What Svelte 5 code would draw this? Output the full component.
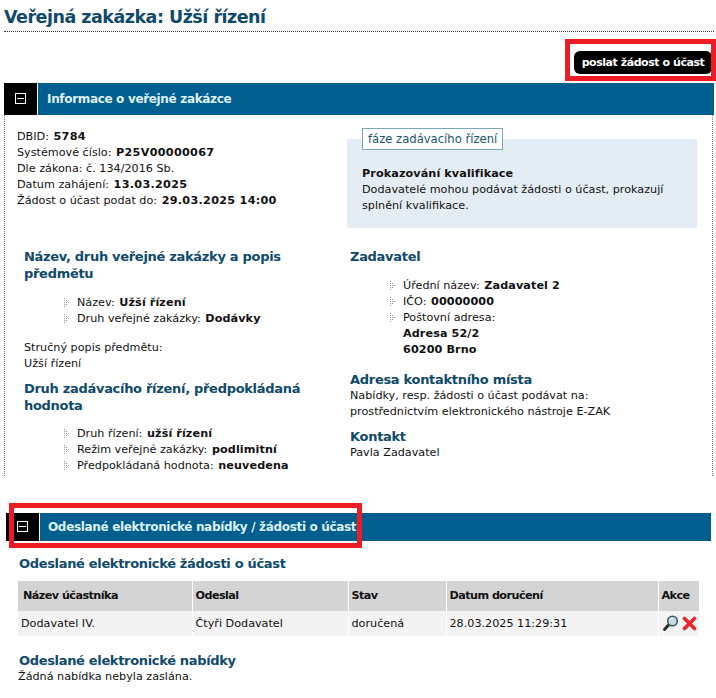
<script>
  const info = [
    { label: "DBID:", value: "5784" },
    { label: "Systémové číslo:", value: "P25V00000067" },
    { label: "Dle zákona: č. 134/2016 Sb.", value: "" },
    { label: "Datum zahájení:", value: "13.03.2025" },
    { label: "Žádost o účast podat do:", value: "29.03.2025 14:00" },
  ];
  const subject = [
    { label: "Název:", value: "Užší řízení" },
    { label: "Druh veřejné zakázky:", value: "Dodávky" },
  ];
  const procedure = [
    { label: "Druh řízení:", value: "užší řízení" },
    { label: "Režim veřejné zakázky:", value: "podlimitní" },
    { label: "Předpokládaná hodnota:", value: "neuvedena" },
  ];
  const buyer = [
    { label: "Úřední název:", value: "Zadavatel 2" },
    { label: "IČO:", value: "00000000" },
  ];
</script>

{#snippet bullet()}
  <svg class="bullet" width="6" height="10" viewBox="0 0 6 10">
    <g fill="#9a9a9a">
      <rect x="0" y="0" width="1" height="1" /><rect x="0" y="2" width="1" height="1" />
      <rect x="0" y="4" width="1" height="1" /><rect x="0" y="6" width="1" height="1" />
      <rect x="0" y="8" width="1" height="1" /><rect x="2" y="2" width="1" height="1" />
      <rect x="2" y="4" width="1" height="1" /><rect x="2" y="6" width="1" height="1" />
      <rect x="4" y="4" width="1" height="1" />
    </g>
  </svg>
{/snippet}

{#snippet toggle()}
  <span class="toggle">
    <svg width="12" height="12" viewBox="0 0 12 12">
      <rect x="0.5" y="0.5" width="10" height="10" fill="none" stroke="#fff" />
      <path d="M2 5.5h7" stroke="#fff" />
    </svg>
  </span>
{/snippet}

<div class="page">
  <h1>Veřejná zakázka: Užší řízení</h1>

  <div class="actions">
    <button type="button">poslat žádost o účast</button>
    <span class="mark mark-button"></span>
  </div>

  <section class="panel">
    <header class="panel-head">
      {@render toggle()}
      <h2>Informace o veřejné zakázce</h2>
    </header>
    <div class="panel-body">
      <div class="summary">
        <div class="facts">
          {#each info as { label, value }}
            <div>{label} <b>{value}</b></div>
          {/each}
        </div>
        <div class="phase">
          <span class="phase-tag">fáze zadávacího řízení</span>
          <div><b class="flush">Prokazování kvalifikace</b></div>
          <div>Dodavatelé mohou podávat žádosti o účast, prokazují splnění kvalifikace.</div>
        </div>
      </div>

      <div class="columns">
        <div class="col-left">
          <h3>Název, druh veřejné zakázky a popis předmětu</h3>
          <ul>
            {#each subject as { label, value }}
              <li>{@render bullet()}{label} <b>{value}</b></li>
            {/each}
          </ul>
          <p class="brief">Stručný popis předmětu:<br />Užší řízení</p>
          <h3>Druh zadávacího řízení, předpokládaná hodnota</h3>
          <ul class="procedure">
            {#each procedure as { label, value }}
              <li>{@render bullet()}{label} <b>{value}</b></li>
            {/each}
          </ul>
        </div>
        <div class="col-right">
          <h3>Zadavatel</h3>
          <ul class="buyer">
            {#each buyer as { label, value }}
              <li>{@render bullet()}{label} <b>{value}</b></li>
            {/each}
            <li>{@render bullet()}Poštovní adresa:<br /><b class="flush">Adresa 52/2<br />60200 Brno</b></li>
          </ul>
          <h3>Adresa kontaktního místa</h3>
          <p>Nabídky, resp. žádosti o účast podávat na:<br />prostřednictvím elektronického nástroje E-ZAK</p>
          <h3 class="contact">Kontakt</h3>
          <p>Pavla Zadavatel</p>
        </div>
      </div>
    </div>
  </section>

  <section class="panel offers">
    <header class="panel-head">
      {@render toggle()}
      <h2>Odeslané elektronické nabídky / žádosti o účast</h2>
      <span class="mark mark-head"></span>
    </header>
    <div class="offers-body">
      <h3>Odeslané elektronické žádosti o účast</h3>
      <table>
        <thead>
          <tr>
            <th class="c1">Název účastníka</th>
            <th class="c2">Odeslal</th>
            <th class="c3">Stav</th>
            <th class="c4">Datum doručení</th>
            <th class="c5">Akce</th>
          </tr>
        </thead>
        <tbody>
          <tr>
            <td>Dodavatel IV.</td>
            <td>Čtyři Dodavatel</td>
            <td>doručená</td>
            <td>28.03.2025 11:29:31</td>
            <td class="icons">
              <svg width="17" height="17" viewBox="0 0 17 17">
                <path d="M6.5 10 2.5 14.5" stroke="#2c2c2c" stroke-width="3" stroke-linecap="round" />
                <circle cx="10.5" cy="6" r="4.8" fill="#c4dbe6" stroke="#3e5a68" stroke-width="1.6" />
                <path d="M8 5a3 3 0 0 1 3-2" fill="none" stroke="#fff" />
              </svg>
              <svg width="15" height="15" viewBox="0 0 15 15">
                <path d="M2.5 2.5 12.5 12.5M12.5 2.5 2.5 12.5" stroke="#e8282c" stroke-width="3.6" stroke-linecap="round" />
              </svg>
            </td>
          </tr>
        </tbody>
      </table>
      <h3 class="last">Odeslané elektronické nabídky</h3>
      <p>Žádná nabídka nebyla zaslána.</p>
    </div>
  </section>
</div>

<style>
  :global(body) {
    margin: 0;
    background: #fff;
  }

  .page {
    width: 716px;
    height: 698px;
    overflow: hidden;
    box-sizing: border-box;
    padding: 0 2px 0 4px;
    font-family: "DejaVu Sans", Verdana, sans-serif;
    font-size: 11.2px;
    line-height: 16px;
    color: #111;
  }

  b {
    margin-left: 1px;
    letter-spacing: 0.1px;
  }

  b.flush {
    margin-left: 0;
  }

  h1 {
    margin: 0;
    height: 32px;
    box-sizing: border-box;
    padding-top: 5px;
    border-bottom: 1px dotted #333;
    font-size: 17.5px;
    letter-spacing: -0.5px;
    line-height: 24px;
    color: #0f4a6b;
  }

  .actions {
    position: relative;
    height: 51px;
    display: flex;
    justify-content: flex-end;
    align-items: flex-start;
    padding-right: 2px;
  }

  button {
    margin-top: 19px;
    width: 138px;
    height: 23px;
    padding: 0;
    border: 0;
    border-radius: 6px;
    background: #000;
    color: #fff;
    font: bold 11px "DejaVu Sans", Verdana, sans-serif;
    letter-spacing: -0.45px;
  }

  .mark {
    position: absolute;
    box-sizing: border-box;
    border: 5px solid #ed1c24;
    pointer-events: none;
  }

  .mark-button {
    right: -2px;
    top: 7px;
    width: 151px;
    height: 42px;
  }

  .panel-head {
    position: relative;
    display: flex;
    align-items: stretch;
    height: 32px;
    background: #005f8f;
    color: #dff0f5;
  }

  .toggle {
    display: flex;
    align-items: center;
    justify-content: center;
    width: 33px;
    background: #000;
    border-right: 1px solid #fff;
  }

  .toggle svg {
    display: block;
  }

  h2 {
    margin: 0 0 0 9px;
    font-size: 12px;
    letter-spacing: -0.33px;
    line-height: 32px;
  }

  .panel-body {
    height: 361px;
    box-sizing: border-box;
    margin-right: 1px;
    border-left: 1px dotted #777;
    border-right: 1px dotted #777;
  }

  .summary {
    display: flex;
    justify-content: space-between;
    height: 113px;
    box-sizing: border-box;
    padding: 14px 15px 0 12px;
  }

  .facts {
    white-space: nowrap;
  }

  .facts b {
    letter-spacing: 0.3px;
  }

  .phase {
    position: relative;
    box-sizing: border-box;
    width: 350px;
    height: 89px;
    margin-top: 10px;
    padding: 27px 15px 0;
    background: #e5edf4;
  }

  .phase-tag {
    position: absolute;
    left: 15px;
    top: -11px;
    height: 22px;
    box-sizing: border-box;
    padding: 0 5px;
    border: 1px solid #7ba5b9;
    background: #fff;
    color: #1a5570;
    font-size: 11.6px;
    line-height: 20px;
    white-space: nowrap;
  }

  .columns {
    display: grid;
    grid-template-columns: 326px 1fr;
    padding: 20px 0 0 19px;
  }

  h3 {
    margin: 0;
    font-size: 13px;
    letter-spacing: -0.3px;
    line-height: 17px;
    color: #0f4a6b;
  }

  p {
    margin: 0;
  }

  ul {
    margin: 0;
    padding: 13px 0 0 40px;
    list-style: none;
  }

  ul.procedure {
    padding-top: 12px;
  }

  li {
    position: relative;
    padding-left: 13px;
    white-space: nowrap;
  }

  .bullet {
    position: absolute;
    left: 0;
    top: 3px;
  }

  .brief {
    margin: 13px 0 8px;
  }

  .buyer {
    padding-bottom: 13px;
  }

  .col-right {
    white-space: nowrap;
  }

  .contact {
    margin-top: 8px;
  }

  .offers {
    margin: 0 3px 0 2px;
    padding-top: 37px;
  }

  .offers .panel-head {
    height: 28px;
  }

  .offers h2 {
    margin-left: 8px;
    line-height: 28px;
    white-space: nowrap;
  }

  .mark-head {
    left: 3px;
    top: -10px;
    width: 353px;
    height: 45px;
  }

  .offers-body {
    padding: 14px 0 0 12px;
  }

  .offers-body h3 {
    padding-left: 1px;
    letter-spacing: -0.33px;
  }

  table {
    width: 681px;
    margin-top: 9px;
    border-collapse: collapse;
    table-layout: fixed;
  }

  th {
    box-sizing: border-box;
    height: 30px;
    padding: 0 3px;
    background: #d4d4d4;
    border-right: 1px solid #fff;
    letter-spacing: -0.55px;
    text-align: left;
    white-space: nowrap;
  }

  th.c1 {
    padding-left: 5px;
  }

  th.c5 {
    padding-left: 3px;
  }

  td {
    box-sizing: border-box;
    height: 25px;
    padding: 0 3px;
    background: #f3f3f3;
    border-right: 1px solid #fff;
    white-space: nowrap;
  }

  th:last-child,
  td:last-child {
    border-right: 0;
  }

  .c1 { width: 174px; }
  .c2 { width: 156px; }
  .c3 { width: 98px; }
  .c4 { width: 212px; }

  .icons {
    font-size: 0;
  }

  .icons svg {
    vertical-align: middle;
  }

  .icons svg + svg {
    margin-left: 3px;
  }

  .offers-body .last {
    margin-top: 16px;
  }
</style>
